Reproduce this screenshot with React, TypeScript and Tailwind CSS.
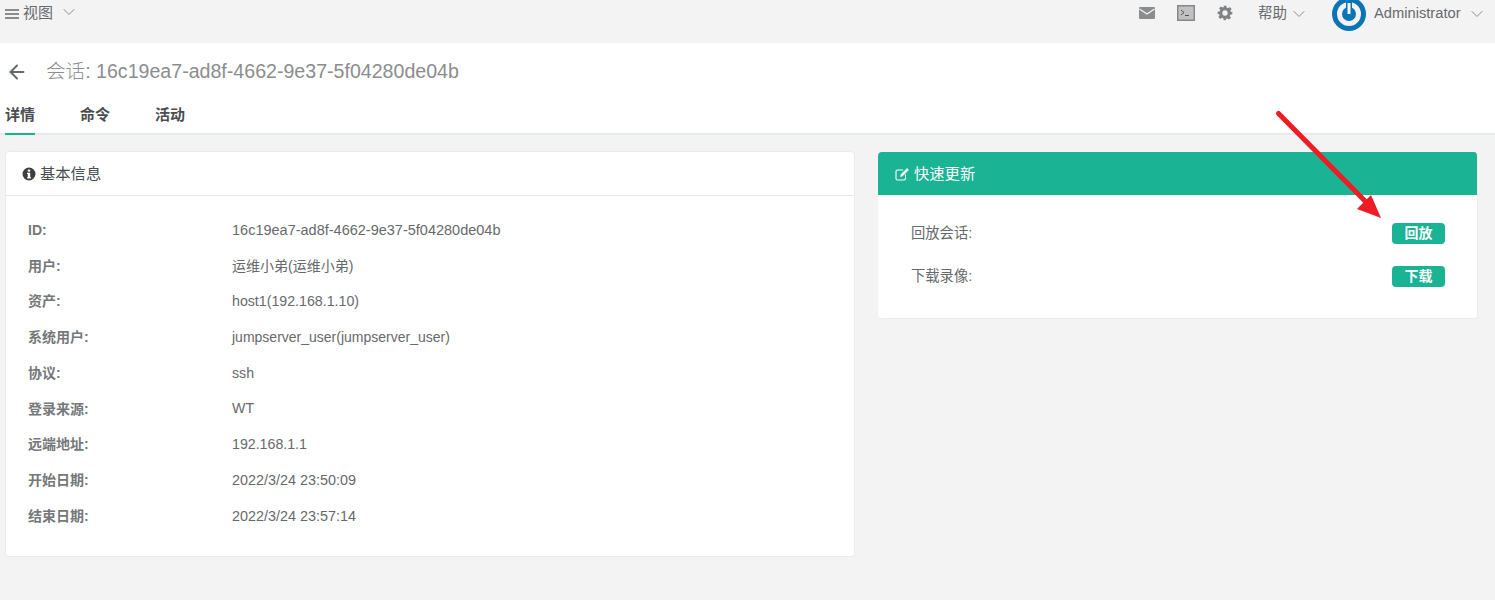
import React from "react";
import { ChevronDown, ArrowLeft } from "lucide-react";

const font = "font-['Liberation_Sans','Noto_Sans_CJK_SC',sans-serif]";

const rows = [
  ["ID:", "16c19ea7-ad8f-4662-9e37-5f04280de04b", "text-[14.5px]"],
  ["用户:", "运维小弟(运维小弟)", "text-[14px]"],
  ["资产:", "host1(192.168.1.10)", "text-[14.2px]"],
  ["系统用户:", "jumpserver_user(jumpserver_user)", "text-[14px]"],
  ["协议:", "ssh", "text-[14.2px]"],
  ["登录来源:", "WT", "text-[14.2px]"],
  ["远端地址:", "192.168.1.1", "text-[14.2px]"],
  ["开始日期:", "2022/3/24 23:50:09", "text-[14.4px]"],
  ["结束日期:", "2022/3/24 23:57:14", "text-[14.4px]"],
];

const TopBar = () => (
  <div className="h-[43px] bg-[#f3f3f4] flex items-start justify-between text-[#676a6c] overflow-hidden">
    <div className="flex items-center h-[27px] pl-[5px]">
      <svg width="14" height="12" viewBox="0 0 14 12" fill="#8a8c8e">
        <rect x="0" y="1" width="14" height="2" />
        <rect x="0" y="5" width="14" height="2" />
        <rect x="0" y="9" width="14" height="2" />
      </svg>
      <span className="ml-[4px] text-[15px]">视图</span>
      <ChevronDown className="ml-[6px] -mt-[3px] w-[20px] h-[20px] text-[#8a8c8e]" strokeWidth={1.2} />
    </div>
    <div className="flex items-center h-[27px]">
      <svg width="16" height="12" viewBox="0 0 16 12" className="-mt-[2px]">
        <rect width="16" height="12" rx="1" fill="#8a8c8e" />
        <path d="M0.5 2 L8 7 L15.5 2" fill="none" stroke="#f3f3f4" strokeWidth="1.3" />
      </svg>
      <svg width="18" height="16" viewBox="0 0 18 16" className="ml-[22px] -mt-[2px]">
        <rect x="0.75" y="0.75" width="16.5" height="14.5" fill="#bfc1c3" stroke="#85878a" strokeWidth="1.5" />
        <path d="M4 5 L7 7.5 L4 10 M8 10.5 H12" fill="none" stroke="#4f5153" strokeWidth="1" />
      </svg>
      <svg width="16" height="16" viewBox="0 0 24 24" fill="#808284" className="ml-[22px] -mt-[2px]">
        <path fillRule="evenodd" d="M10 1h4l.6 3.1 1.9.8 2.6-1.8 2.8 2.8-1.8 2.6.8 1.9L23 10v4l-3.1.6-.8 1.9 1.8 2.6-2.8 2.8-2.6-1.8-1.9.8L13 23h-3l-.6-3.1-1.9-.8-2.6 1.8-2.8-2.8 1.8-2.6-.8-1.9L1 14v-4l3.1-.6.8-1.9-1.8-2.6 2.8-2.8 2.6 1.8 1.9-.8zM12 8a4 4 0 1 0 0 8 4 4 0 0 0 0-8z" />
      </svg>
      <span className="ml-[25px] text-[14.5px] w-[29px] whitespace-nowrap">帮助</span>
      <ChevronDown className="ml-[2px] w-[20px] h-[20px] text-[#8a8c8e]" strokeWidth={1.2} />
      <svg width="34" height="34" viewBox="0 0 34 34" className="ml-[23px] shrink-0">
        <circle cx="17" cy="17" r="17" fill="#0a75b5" />
        <circle cx="17" cy="17" r="9.5" fill="none" stroke="#f3f3f4" strokeWidth="5" />
        <rect x="14" y="5" width="6" height="13" fill="#0a75b5" />
        <rect x="15.5" y="6" width="3" height="11" fill="#f3f3f4" />
      </svg>
      <span className="ml-[8px] text-[14.7px] w-[87px] whitespace-nowrap">Administrator</span>
      <ChevronDown className="ml-[6px] mr-[8px] w-[20px] h-[20px] text-[#8a8c8e]" strokeWidth={1.2} />
    </div>
  </div>
);

const PageHeader = () => (
  <div className="h-[92px] bg-white border-b-2 border-[#e7eaec] flex flex-col">
    <div className="h-[57px] flex items-center pl-[6px] text-[#8b8d8f]">
      <ArrowLeft className="w-[22px] h-[22px] text-[#676a6c]" strokeWidth={2.2} />
      <span className="ml-[18px] text-[19.6px] font-light">会话: 16c19ea7-ad8f-4662-9e37-5f04280de04b</span>
    </div>
    <div className="flex h-[33px] pl-[5px] text-[15px] text-[#4a4d4f] font-semibold">
      <div className="w-[30px] h-[35px] border-b-2 border-[#1ab394] pt-[5px] leading-[20px]">详情</div>
      <div className="ml-[45px] pt-[5px] leading-[20px]">命令</div>
      <div className="ml-[45px] pt-[5px] leading-[20px]">活动</div>
    </div>
  </div>
);

const BasicInfo = () => (
  <div className="w-[850px] h-[406px] bg-white rounded-[4px] border border-[#ececec] shrink-0">
    <div className="h-[44px] border-b border-[#e7eaec] flex items-center pl-[16px] pt-[1px] text-[15.3px] text-[#4a4d4f]">
      <svg width="14" height="14" viewBox="0 0 14 14" className="mr-[4px]">
        <circle cx="7" cy="7" r="6.5" fill="#3c3e40" />
        <rect x="5.8" y="2.6" width="2.4" height="2" fill="#fff" />
        <path d="M5 5.8H8.2V10.2H9V11.4H5V10.2H5.8V7H5z" fill="#fff" />
      </svg>
      基本信息
    </div>
    <div className="pt-[16.5px] pl-[22px] text-[#676a6c]">
      {rows.map(([k, v, size]) => (
        <div key={k} className="flex h-[35.75px] items-center">
          <div className="w-[204px] text-[14px] font-bold text-[#75787a]">{k}</div>
          <div className={size}>{v}</div>
        </div>
      ))}
    </div>
  </div>
);

const QuickUpdate = () => (
  <div className="w-[600px] h-[167px] bg-white rounded-[4px] border-b border-r border-[#ececec] shrink-0 mt-[1px] ml-[23px] overflow-hidden">
    <div className="h-[43px] bg-[#1ab394] flex items-center pl-[17px] pt-[1px] text-[15.3px] text-white">
      <svg width="15" height="14" viewBox="0 0 15 14" fill="none" stroke="#fff" className="mr-[4px]">
        <path d="M10.5 7.5V11.5a1.5 1.5 0 0 1-1.5 1.5H2.5A1.5 1.5 0 0 1 1 11.5V4.5A1.5 1.5 0 0 1 2.5 3H8" strokeWidth="1.1" />
        <path d="M5.5 9.5 L6 7.5 L12 1.5 L13.5 3 L7.5 9 Z" fill="#fff" strokeWidth="0.6" />
      </svg>
      快速更新
    </div>
    <div className="pt-[17px] pl-[33px] pr-[32px] text-[14.3px] text-[#676a6c]">
      {[["回放会话:", "回放"], ["下载录像:", "下载"]].map(([k, b]) => (
        <div key={k} className="flex h-[43px] items-center justify-between">
          <span>{k}</span>
          <span className="w-[53px] h-[21px] rounded-[4px] bg-[#1ab394] text-white text-[14px] font-bold leading-[21px] text-center">{b}</span>
        </div>
      ))}
    </div>
  </div>
);

export default function App() {
  return (
    <div className={`${font} relative w-[1495px] h-[600px] bg-[#f3f3f4] overflow-hidden`}>
      <TopBar />
      <PageHeader />
      <div className="flex pt-[16px] pl-[5px]">
        <BasicInfo />
        <QuickUpdate />
      </div>
      {/* annotation arrow drawn over the page */}
      <svg className="absolute left-[1270px] top-[105px]" width="120" height="120" viewBox="0 0 120 120">
        <path d="M8.5 8.5 L97 98" stroke="#ee1c25" strokeWidth="5" strokeLinecap="round" fill="none" />
        <path d="M111 113 L87 104 L101 90 Z" fill="#ee1c25" />
      </svg>
    </div>
  );
}
